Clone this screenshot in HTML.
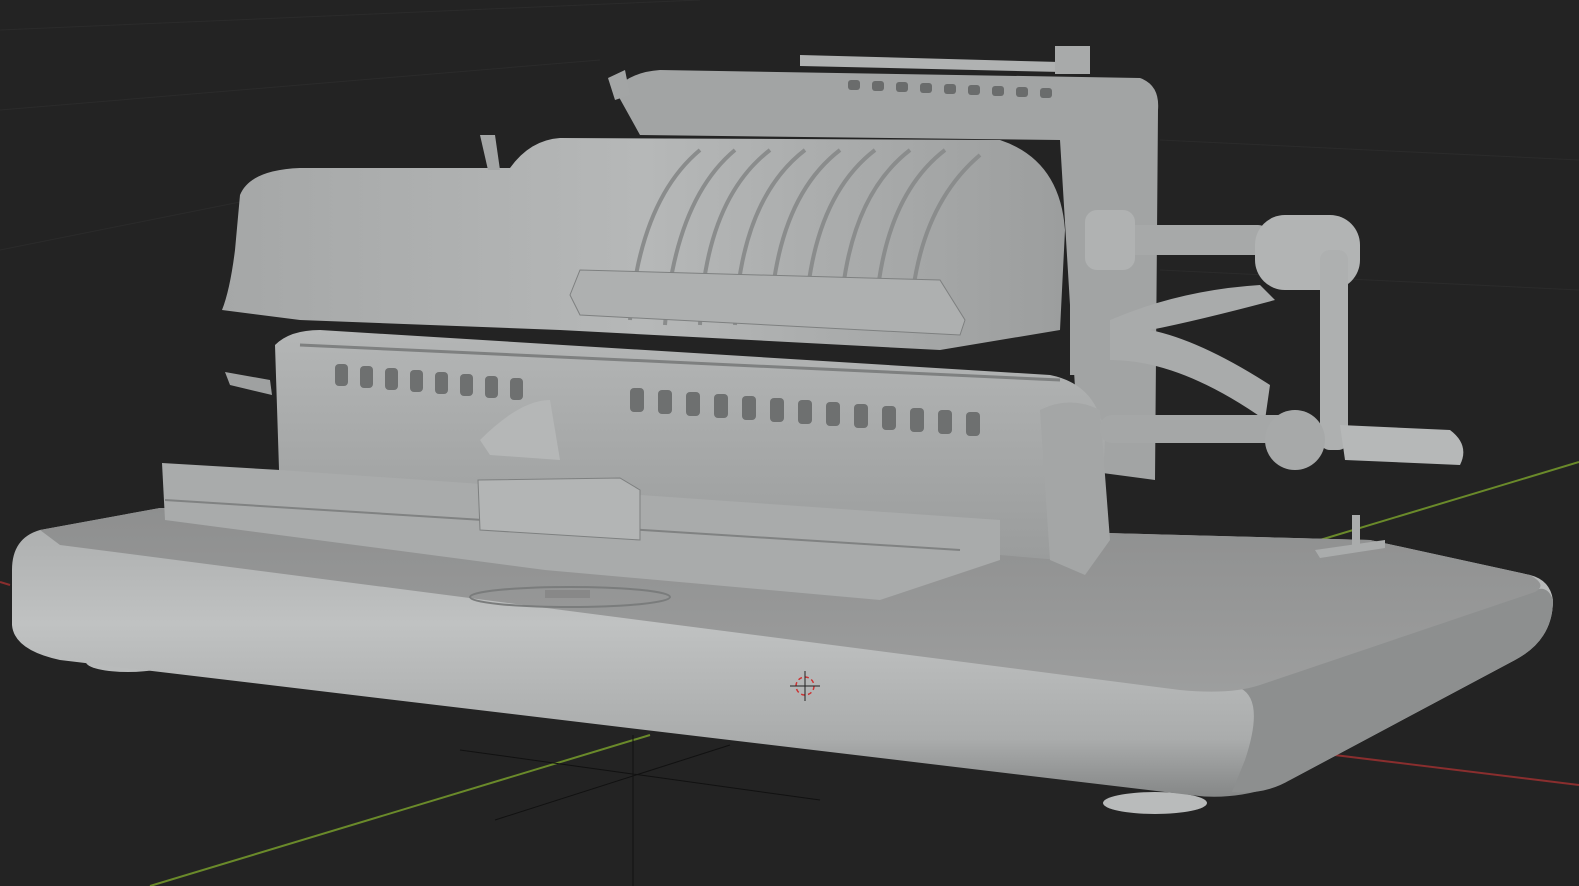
<!DOCTYPE html>
<html><head><meta charset="utf-8"><style>
html,body{margin:0;padding:0;background:#232323;overflow:hidden}
svg{display:block}
</style></head><body>
<svg width="1579" height="886" viewBox="0 0 1579 886" xmlns="http://www.w3.org/2000/svg">
<defs>
<linearGradient id="front" x1="0" y1="0" x2="0" y2="1">
<stop offset="0" stop-color="#a9abab"/><stop offset="0.4" stop-color="#c0c2c2"/><stop offset="0.8" stop-color="#aaacac"/><stop offset="1" stop-color="#858787"/></linearGradient>
<linearGradient id="top" x1="0" y1="0" x2="0" y2="1">
<stop offset="0" stop-color="#8e8f8f"/><stop offset="1" stop-color="#9d9e9e"/></linearGradient>
<linearGradient id="body" x1="0" y1="0" x2="0" y2="1">
<stop offset="0" stop-color="#b4b6b6"/><stop offset="1" stop-color="#9a9c9c"/></linearGradient>
<linearGradient id="upper" x1="0" y1="0" x2="1" y2="0">
<stop offset="0" stop-color="#a5a7a7"/><stop offset="0.5" stop-color="#b6b8b8"/><stop offset="1" stop-color="#9c9e9e"/></linearGradient>
</defs>
<rect width="1579" height="886" fill="#232323"/>
<g stroke="#2b2b2b" stroke-width="1">
<line x1="0" y1="110" x2="600" y2="60"/><line x1="0" y1="250" x2="250" y2="200"/>
<line x1="1160" y1="140" x2="1579" y2="160"/><line x1="1160" y1="270" x2="1579" y2="290"/>
<line x1="0" y1="30" x2="700" y2="0"/>
</g>
<line x1="150" y1="886" x2="650" y2="735" stroke="#6a8a2a" stroke-width="2"/>
<line x1="1320" y1="540" x2="1579" y2="462" stroke="#6a8a2a" stroke-width="2"/>
<line x1="1310" y1="752" x2="1579" y2="785" stroke="#8a2e2e" stroke-width="2"/>
<line x1="0" y1="582" x2="10" y2="585" stroke="#8a2e2e" stroke-width="2"/>
<g stroke="#111" stroke-width="1"><line x1="460" y1="750" x2="820" y2="800"/><line x1="495" y1="820" x2="730" y2="745"/><line x1="633" y1="735" x2="633" y2="886"/></g>
<!-- feet -->
<ellipse cx="128" cy="662" rx="42" ry="10" fill="#b9bbbb"/>
<ellipse cx="1155" cy="803" rx="52" ry="11" fill="#b9bbbb"/>
<!-- base whole -->
<path d="M40,530 Q12,538 12,570 L12,625 Q14,650 60,660 L1190,795 Q1240,802 1290,780 L1515,660 Q1553,640 1553,600 Q1550,580 1530,575 L1370,540 L160,508 Z" fill="url(#front)"/>
<path d="M1240,688 Q1265,700 1245,760 L1232,792 Q1265,795 1290,780 L1515,660 Q1553,640 1553,600 Q1548,585 1535,590 Z" fill="#8d8f8f"/>
<!-- base top -->
<path d="M40,530 L160,508 L1370,540 L1530,575 Q1548,585 1535,592 L1260,685 Q1230,695 1180,690 L60,545 Z" fill="url(#top)"/>
<ellipse cx="570" cy="597" rx="100" ry="10" fill="none" stroke="#7a7c7c" stroke-width="2"/>
<rect x="545" y="590" width="45" height="8" fill="#888"/>
<!-- back-top housing -->
<path d="M615,90 Q630,72 660,70 L1140,78 Q1160,85 1158,110 L1155,480 L1080,470 L1060,140 L640,135 Z" fill="#a2a4a4"/>
<path d="M800,55 L1060,62 L1062,72 L800,66 Z" fill="#b0b2b2"/>
<rect x="1055" y="46" width="35" height="28" fill="#a8aaaa"/>
<g fill="#6a6c6c">
<rect x="848" y="80" width="12" height="10" rx="3"/><rect x="872" y="81" width="12" height="10" rx="3"/><rect x="896" y="82" width="12" height="10" rx="3"/><rect x="920" y="83" width="12" height="10" rx="3"/><rect x="944" y="84" width="12" height="10" rx="3"/><rect x="968" y="85" width="12" height="10" rx="3"/><rect x="992" y="86" width="12" height="10" rx="3"/><rect x="1016" y="87" width="12" height="10" rx="3"/><rect x="1040" y="88" width="12" height="10" rx="3"/>
</g>
<!-- upper rounded housing -->
<path d="M240,195 Q250,170 300,168 L510,168 Q530,140 560,138 L1000,140 Q1060,160 1065,230 L1060,330 L940,350 L560,330 L300,320 L222,310 Q230,290 235,250 Z" fill="url(#upper)"/>
<g stroke="#8a8c8c" stroke-width="4" fill="none">
<path d="M630,320 Q640,200 700,150"/><path d="M665,325 Q675,200 735,150"/><path d="M700,325 Q705,200 770,150"/><path d="M735,325 Q740,200 805,150"/><path d="M770,325 Q775,200 840,150"/><path d="M805,325 Q810,200 875,150"/><path d="M840,325 Q845,200 910,150"/><path d="M875,325 Q880,200 945,150"/><path d="M910,325 Q915,210 980,155"/>
</g>
<path d="M570,295 L580,270 L940,280 L965,320 L960,335 L580,315 Z" fill="#aeb0b0" stroke="#7e8080"/>
<!-- main lower housing -->
<path d="M275,345 Q290,330 320,330 L1050,375 Q1100,385 1105,440 L1100,540 L1060,560 L1000,555 L280,500 Z" fill="url(#body)"/>
<line x1="300" y1="345" x2="1060" y2="380" stroke="#7e8080" stroke-width="3"/>
<g fill="#6e7070">
<rect x="335" y="364" width="13" height="22" rx="4"/><rect x="360" y="366" width="13" height="22" rx="4"/><rect x="385" y="368" width="13" height="22" rx="4"/><rect x="410" y="370" width="13" height="22" rx="4"/><rect x="435" y="372" width="13" height="22" rx="4"/><rect x="460" y="374" width="13" height="22" rx="4"/><rect x="485" y="376" width="13" height="22" rx="4"/><rect x="510" y="378" width="13" height="22" rx="4"/>
<rect x="630" y="388" width="14" height="24" rx="4"/><rect x="658" y="390" width="14" height="24" rx="4"/><rect x="686" y="392" width="14" height="24" rx="4"/><rect x="714" y="394" width="14" height="24" rx="4"/><rect x="742" y="396" width="14" height="24" rx="4"/><rect x="770" y="398" width="14" height="24" rx="4"/><rect x="798" y="400" width="14" height="24" rx="4"/><rect x="826" y="402" width="14" height="24" rx="4"/><rect x="854" y="404" width="14" height="24" rx="4"/><rect x="882" y="406" width="14" height="24" rx="4"/><rect x="910" y="408" width="14" height="24" rx="4"/><rect x="938" y="410" width="14" height="24" rx="4"/><rect x="966" y="412" width="14" height="24" rx="4"/>
</g>
<path d="M1040,410 Q1070,395 1100,410 L1110,540 L1085,575 L1050,560 Z" fill="#a4a6a6"/>
<!-- slide rail -->
<path d="M162,463 L280,470 L1000,520 L1000,560 L880,600 L545,570 L165,520 Z" fill="#a9abab"/>
<line x1="165" y1="500" x2="960" y2="550" stroke="#808282" stroke-width="2"/>
<path d="M478,480 L620,478 L640,490 L640,540 L480,530 Z" fill="#b3b5b5" stroke="#7e8080"/>
<path d="M480,440 Q520,400 550,400 L560,460 L490,455 Z" fill="#b5b7b7"/>
<!-- crank -->
<rect x="1090" y="225" width="180" height="30" rx="12" fill="#a7a9a9"/>
<rect x="1085" y="210" width="50" height="60" rx="12" fill="#b0b2b2"/>
<rect x="1070" y="305" width="50" height="70" fill="#a2a4a4"/>
<path d="M1110,320 Q1180,290 1260,285 L1275,300 Q1200,320 1150,330 Q1200,340 1270,385 L1265,420 Q1180,360 1110,360 Z" fill="#a9abab"/>
<rect x="1100" y="415" width="190" height="28" rx="12" fill="#a5a7a7"/>
<rect x="1255" y="215" width="105" height="75" rx="30" fill="#b2b4b4"/>
<rect x="1320" y="250" width="28" height="200" rx="10" fill="#aeb0b0"/>
<circle cx="1295" cy="440" r="30" fill="#a7a9a9"/>
<path d="M1340,425 L1450,430 Q1470,445 1460,465 L1345,460 Z" fill="#b6b8b8"/>
<path d="M1315,550 L1385,540 L1385,548 L1320,558 Z" fill="#aaacac"/>
<rect x="1352" y="515" width="8" height="30" fill="#aaacac"/>
<path d="M225,372 L270,380 L272,395 L230,385 Z" fill="#9fa1a1"/>
<path d="M480,135 L495,135 L500,170 L488,170 Z" fill="#a3a5a5"/>
<path d="M608,78 L625,70 L630,95 L615,100 Z" fill="#a3a5a5"/>
<circle cx="805" cy="686" r="9" fill="none" stroke="#c33" stroke-width="1.5" stroke-dasharray="4 3"/>
<line x1="790" y1="686" x2="820" y2="686" stroke="#222"/><line x1="805" y1="671" x2="805" y2="701" stroke="#222"/>
</svg>
</body></html>
